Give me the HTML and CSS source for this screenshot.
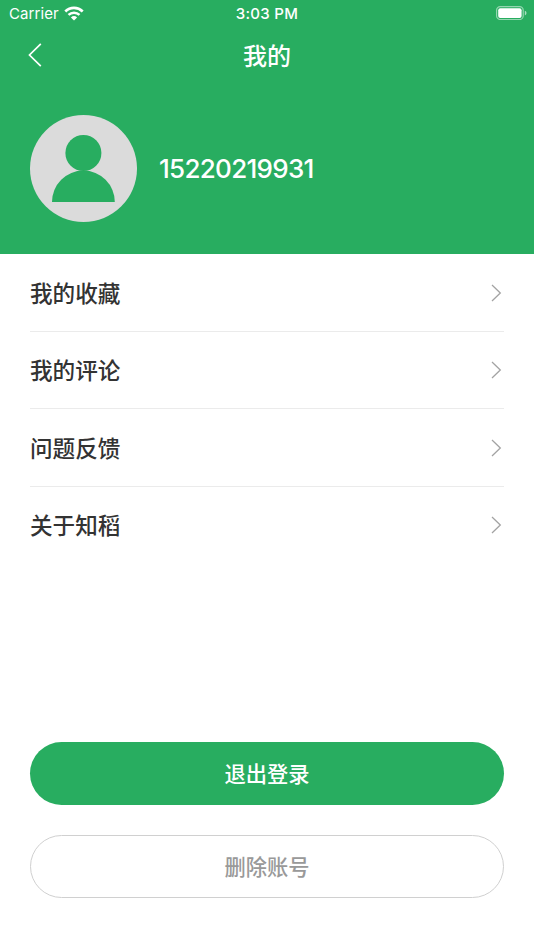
FILE: index.html
```html
<!DOCTYPE html>
<html lang="zh-CN">
<head>
  <meta charset="UTF-8" />
  <meta name="viewport" content="width=device-width, initial-scale=1.0" />
  <title>我的</title>
  <link rel="stylesheet" href="styles.css">
</head>
<body>
  <div class="page">
    <header class="header">
      <div class="status-bar">
        <div class="status-left">
          <span class="carrier">Carrier</span>
          <svg class="wifi" width="20" height="15" viewBox="0 0 20 15">
            <path d="M1.3 5.4a12.6 12.6 0 0 1 17.4 0" fill="none" stroke="#fff" stroke-width="2.7"/>
            <path d="M4.5 8.9a8 8 0 0 1 11 0" fill="none" stroke="#fff" stroke-width="2.5"/>
            <path d="M6.9 11.5a4.5 4.5 0 0 1 6.2 0L10 14.6z" fill="#fff"/>
          </svg>
        </div>
        <span class="time">3:03 PM</span>
        <svg class="battery" width="32" height="14" viewBox="0 0 32 14">
          <rect x="0.6" y="0.6" width="26.6" height="12.9" rx="3.6" fill="none" stroke="#fff" stroke-opacity="0.5" stroke-width="1.2"/>
          <rect x="2.2" y="2.2" width="23.4" height="9.7" rx="2" fill="#fff"/>
          <path d="M28.8 4.8a2.4 2.4 0 0 1 0 4.6z" fill="#fff" fill-opacity="0.6"/>
        </svg>
      </div>
      <div class="nav">
        <svg class="back" width="14" height="24" viewBox="0 0 14 24">
          <path d="M12.8 0.9L1.5 12l11.3 11.1" fill="none" stroke="#fff" stroke-width="1.7"/>
        </svg>
        <h1>我的</h1>
      </div>
      <div class="profile">
        <svg class="avatar" width="107" height="107" viewBox="0 0 107 107">
          <circle cx="53.5" cy="53.5" r="53.5" fill="#dbdbdb"/>
          <circle cx="53.4" cy="38" r="18" fill="#28ad60"/>
          <path d="M22 87a31.4 31.4 0 0 1 62.8 0z" fill="#28ad60"/>
        </svg>
        <span class="phone">15220219931</span>
      </div>
    </header>
    <ul class="menu">
      <li>
        <span>我的收藏</span>
        <svg class="arrow" width="11" height="18" viewBox="0 0 11 18"><path d="M1 1l8.3 8L1 17"/></svg>
      </li>
      <li>
        <span>我的评论</span>
        <svg class="arrow" width="11" height="18" viewBox="0 0 11 18"><path d="M1 1l8.3 8L1 17"/></svg>
      </li>
      <li>
        <span>问题反馈</span>
        <svg class="arrow" width="11" height="18" viewBox="0 0 11 18"><path d="M1 1l8.3 8L1 17"/></svg>
      </li>
      <li>
        <span>关于知稻</span>
        <svg class="arrow" width="11" height="18" viewBox="0 0 11 18"><path d="M1 1l8.3 8L1 17"/></svg>
      </li>
    </ul>
    <div class="actions">
      <button class="button logout">退出登录</button>
      <button class="button delete">删除账号</button>
    </div>
  </div>
</body>
</html>
```
FILE: styles.css
```css
* { box-sizing: border-box; }
body {
  margin: 0;
  background: #fff;
  font-family: Inter, "Noto Sans CJK SC", sans-serif;
  color: #333;
}
.page {
  height: 950px;
  display: flex;
  flex-direction: column;
  overflow: hidden;
}
.header {
  height: 254.3px;
  background: #28ad60;
  color: #fff;
}
.status-bar {
  height: 27px;
  padding: 0 6px 0 9px;
  display: grid;
  grid-template-columns: 1fr auto 1fr;
  align-items: center;
}
.status-left {
  display: flex;
  align-items: center;
  gap: 5px;
}
.carrier {
  font-size: 15px;
  letter-spacing: 0.1px;
}
.time {
  margin-right: 3px;
  font-size: 15px;
  font-weight: 550;
  letter-spacing: 0.3px;
}
.battery {
  justify-self: end;
  margin-bottom: 1px;
}
.nav {
  height: 56px;
  padding: 0 28px;
  display: grid;
  grid-template-columns: 1fr auto 1fr;
  align-items: center;
}
.nav h1 {
  margin: 0;
  padding-top: 3px;
  font-size: 24px;
  line-height: 34px;
  font-weight: 500;
}
.profile {
  display: flex;
  align-items: center;
  gap: 22px;
  margin-top: 32px;
  padding: 0 30px;
}
.phone {
  font-size: 26px;
  font-weight: 450;
  letter-spacing: -0.7px;
}
.menu {
  list-style: none;
  margin: 0;
  padding: 0 30px;
}
.menu li {
  height: 77.5px;
  display: flex;
  align-items: center;
  justify-content: space-between;
  border-bottom: 1px solid #ebebeb;
  font-size: 22.6px;
  line-height: 32px;
  font-weight: 500;
}
.menu li span { padding-top: 2px; }
.menu li:last-child { border-bottom-color: transparent; }
.arrow {
  margin-right: 2px;
  fill: none;
  stroke: #a3a3a3;
  stroke-width: 1.3;
}
.actions {
  margin-top: auto;
  padding: 0 30px 52px;
  display: flex;
  flex-direction: column;
  gap: 30px;
}
.button {
  height: 63px;
  padding: 0 0 2px;
  border: none;
  border-radius: 32px;
  font-family: inherit;
  font-size: 21.3px;
  font-weight: 500;
}
.logout {
  background: #28ad60;
  color: #fff;
}
.delete {
  background: #fff;
  border: 1px solid #d0d0d0;
  color: #999;
}
```
